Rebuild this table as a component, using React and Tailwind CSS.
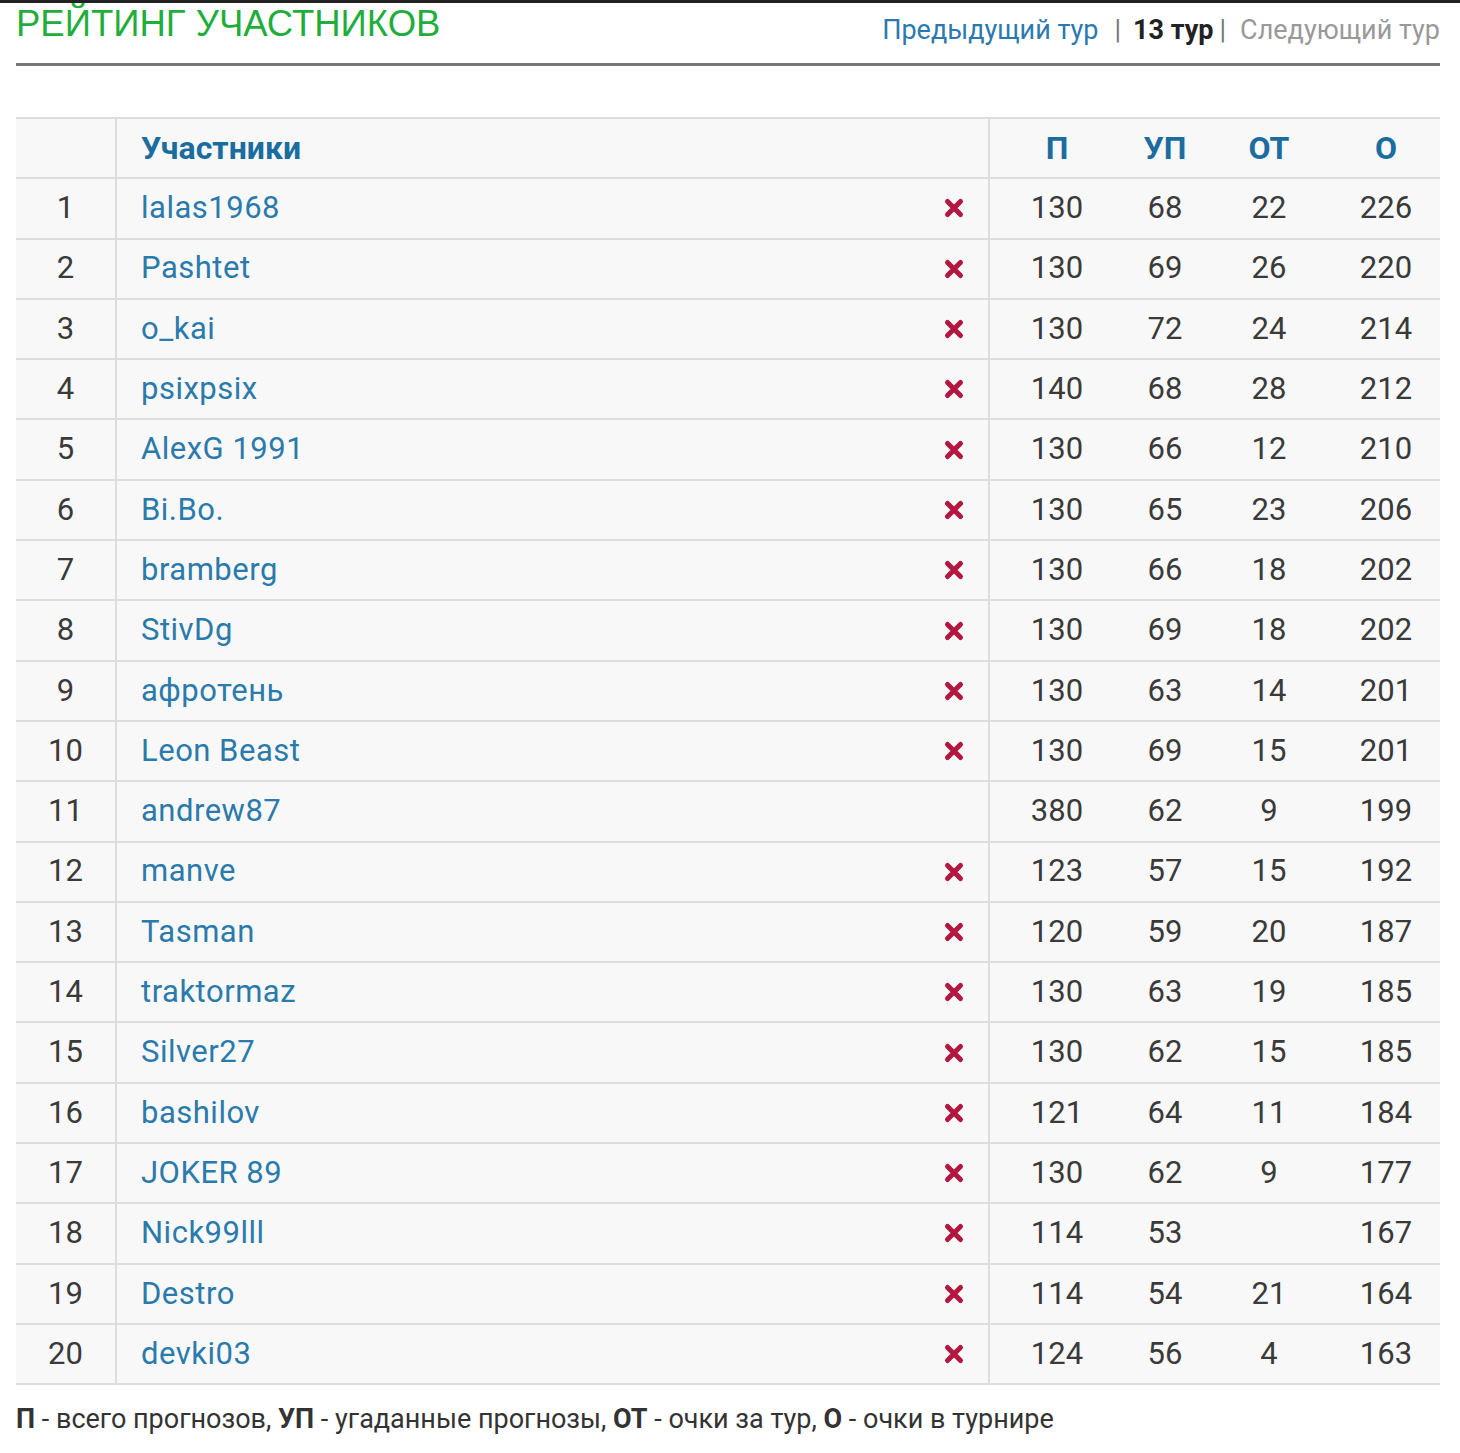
import React from 'react'

const rows = [
  [1, 'lalas1968', true, 130, 68, 22, 226],
  [2, 'Pashtet', true, 130, 69, 26, 220],
  [3, 'o_kai', true, 130, 72, 24, 214],
  [4, 'psixpsix', true, 140, 68, 28, 212],
  [5, 'AlexG 1991', true, 130, 66, 12, 210],
  [6, 'Bi.Bo.', true, 130, 65, 23, 206],
  [7, 'bramberg', true, 130, 66, 18, 202],
  [8, 'StivDg', true, 130, 69, 18, 202],
  [9, 'афротень', true, 130, 63, 14, 201],
  [10, 'Leon Beast', true, 130, 69, 15, 201],
  [11, 'andrew87', false, 380, 62, 9, 199],
  [12, 'manve', true, 123, 57, 15, 192],
  [13, 'Tasman', true, 120, 59, 20, 187],
  [14, 'traktormaz', true, 130, 63, 19, 185],
  [15, 'Silver27', true, 130, 62, 15, 185],
  [16, 'bashilov', true, 121, 64, 11, 184],
  [17, 'JOKER 89', true, 130, 62, 9, 177],
  [18, 'Nick99lll', true, 114, 53, '', 167],
  [19, 'Destro', true, 114, 54, 21, 164],
  [20, 'devki03', true, 124, 56, 4, 163],
]

function Cross(){
  return (
    <svg width="22" height="22" viewBox="0 0 22 22">
      <path d="M4.5 4.5 L17.5 17.5 M17.5 4.5 L4.5 17.5" stroke="#b3163e" strokeWidth="5" strokeLinecap="round" />
    </svg>
  )
}

const grid = 'grid grid-cols-[99px_875px_134px_82px_126px_108px] h-[60.3px] border-b-2 border-[#dddddd] bg-[#f8f8f8] items-center'

export default function App(){
  return (
    <div className="w-[1460px] h-[1453px] bg-white overflow-hidden border-t-[3px] border-[#222]" style={{fontFamily: 'Roboto, "Noto Sans", sans-serif'}}>
      <div className="ml-4 w-[1424px] h-[63px] border-b-[3px] border-[#777] flex justify-between items-start">
        <h1 className="text-[36.5px] leading-none text-[#1fae3b] mt-[3px]" style={{fontFamily: '"Liberation Sans", Arial, sans-serif'}}>РЕЙТИНГ УЧАСТНИКОВ</h1>
        <div className="flex items-center text-[27px] leading-none mt-[14px]">
          <span className="text-[#2a7ab0]">Предыдущий тур</span>
          <span className="text-[#777] ml-[16px] mr-[12px]">|</span>
          <span className="text-[#222] font-bold">13 тур</span>
          <span className="text-[#777] ml-[6px] mr-[14px]">|</span>
          <span className="text-[#999]">Следующий тур</span>
        </div>
      </div>

      <div className="ml-4 w-[1424px] mt-[51px] border-t-2 border-[#dddddd]">
        <div className={grid + ' font-bold text-[#1b6da0] text-[32px]'}>
          <div className="h-full"></div>
          <div className="h-full border-l-2 border-r-2 border-[#dddddd] flex items-center pl-[24px]">Участники</div>
          <div className="text-center">П</div>
          <div className="text-center">УП</div>
          <div className="text-center">ОТ</div>
          <div className="text-center">О</div>
        </div>
        {rows.map(r => (
          <div key={r[0]} className={grid + ' text-[31px] text-[#3a3a3a]'}>
            <div className="text-center">{r[0]}</div>
            <div className="h-full border-l-2 border-r-2 border-[#dddddd] flex items-center justify-between pl-[24px] pr-[23px]">
              <span className="text-[#2a7aab] tracking-[0.5px]">{r[1]}</span>
              {r[2] ? <Cross /> : null}
            </div>
            <div className="text-center">{r[3]}</div>
            <div className="text-center">{r[4]}</div>
            <div className="text-center">{r[5]}</div>
            <div className="text-center">{r[6]}</div>
          </div>
        ))}
      </div>

      <div className="ml-4 mt-[14px] text-[27px] text-[#333]">
        <b>П</b> - всего прогнозов, <b>УП</b> - угаданные прогнозы, <b>ОТ</b> - очки за тур, <b>О</b> - очки в турнире
      </div>
    </div>
  )
}
